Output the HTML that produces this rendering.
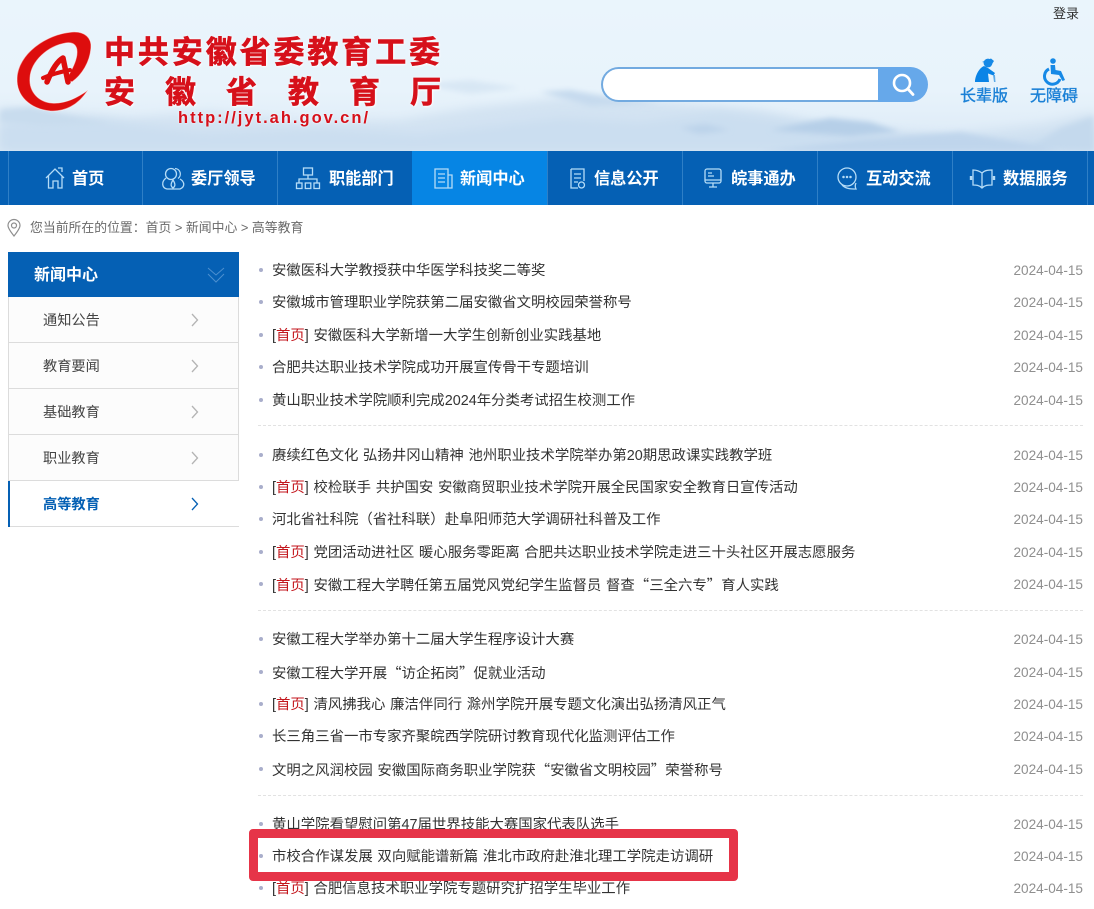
<!DOCTYPE html>
<html lang="zh-CN"><head><meta charset="utf-8"><title>高等教育</title>
<style>
html,body{margin:0;padding:0;background:#fff}
#p{position:relative;width:1094px;height:909px;overflow:hidden;background:#fff;font-family:"Liberation Sans","Noto Sans CJK SC",sans-serif;color:#333}
#p div,#p span.a,#p svg{position:absolute}
.t{white-space:nowrap}
.nav{top:152px;height:54px;line-height:54px;color:#fff;font-size:16.2px;font-weight:700;white-space:nowrap}
.ln{top:151px;width:1px;height:54px;background:#2f7fc6}
.r{left:272px;font-size:14.4px;line-height:20px;white-space:nowrap;color:#333;margin-top:1px;word-spacing:.7px}
.r b{font-weight:400;color:#c3161c}
.q{font-family:"Noto Sans CJK SC",sans-serif}
.d{left:983px;width:100px;text-align:right;font-size:13.6px;line-height:20px;color:#8f8f8f;margin-top:1px}
.b{left:258.5px;width:4px;height:4px;border-radius:50%;background:#a9aecb}
.sp{left:258px;width:825px;border-top:1px dashed #e2e2e2;height:0}
.s{left:43px;font-size:14.2px;line-height:20px;color:#444;white-space:nowrap;margin-top:1px}
.g{left:8px;width:231px;height:1px;background:#dcdcdc}
.hz{color:#d6101a;font-weight:700;font-size:31px;line-height:34px;white-space:nowrap;font-family:"Noto Sans CJK SC",sans-serif;-webkit-text-stroke:.6px #d6101a;text-shadow:0 0 3px #fff,1px 1px 2px #fff}
.bl{font-size:16px;line-height:22px;color:#1a80d6;-webkit-text-stroke:.35px #1a80d6}
</style></head><body><div id="p">

<svg style="left:0;top:0" width="1094" height="151" viewBox="0 0 1094 151">
<defs>
<linearGradient id="bg" x1="0" y1="0" x2="0" y2="1"><stop offset="0" stop-color="#eaf5fc"/><stop offset=".6" stop-color="#e8f3fb"/><stop offset="1" stop-color="#dbe9f6"/></linearGradient>
<filter id="f1" x="-10%" y="-40%" width="120%" height="180%"><feGaussianBlur stdDeviation="5"/></filter>
<filter id="f2" x="-10%" y="-40%" width="120%" height="180%"><feGaussianBlur stdDeviation="3"/></filter>
</defs>
<rect width="1094" height="151" fill="url(#bg)"/>
<path d="M0 108 L60 112 L130 118 L210 112 L300 122 L400 120 L470 108 L560 98 L640 100 L760 110 L840 128 L950 134 L1040 124 L1094 112 V151 H0Z" fill="#d3e3f2" filter="url(#f1)"/>
<path d="M0 124 L100 120 L200 132 L320 128 L420 134 L560 118 L640 122 L720 112 L800 122 L880 134 L980 142 L1094 130 V151 H0Z" fill="#cbdef0" filter="url(#f1)"/>
<path d="M540 92 L570 90 L610 98 L660 104 L590 106Z" fill="#c6daee" filter="url(#f2)"/>
<path d="M770 130 L800 124 L830 118 L870 122 L900 132 L850 136Z" fill="#b6cfe8" filter="url(#f2)"/>
<path d="M680 128 L705 124 L730 130 L700 134Z" fill="#bcd3ea" filter="url(#f2)"/>
<path d="M0 110 L30 107 L60 114 L110 124 L40 126 L0 122Z" fill="#c8dcee" filter="url(#f2)"/>
<path d="M420 84 L470 80 L520 88 L470 94Z" fill="#d8e7f4" filter="url(#f2)"/>
<path d="M1030 148 L1060 128 L1094 116 V151Z" fill="#c4d9ed" filter="url(#f2)"/>
<path d="M760 151 L860 140 L960 132 L1040 146 L1060 151Z" fill="#bfd5ec" filter="url(#f2)"/>
</svg>

<!-- logo -->
<svg style="left:10px;top:28px" width="100" height="92" viewBox="0 0 100 92">
<path fill="#dd0d0d" stroke="#fff" stroke-opacity=".55" stroke-width="1" d="M78 62 C68 78 54 84 40 83 C20 81 6 68 7 50 C8 26 36 6 62 4 C75 3 82 10 81 20 C80 34 72 47 62 54 L56 51 C62 42 67 32 67 24 C67 17 63 14 56 15 C38 18 21 33 20 50 C19 64 29 74 42 75 C55 76 67 70 78 62Z"/>
<g fill="none" stroke="#dd0d0d" stroke-linecap="round" stroke-linejoin="round">
<path stroke-width="5.500" d="M37 54 C41 44 46 34 53 30 L58 54"/>
<path stroke-width="4" d="M33 50 C42 46 50 44 60 42"/>
</g>
</svg>

<div class="hz" style="left:104px;top:33px;letter-spacing:2.9px">中共安徽省委教育工委</div>
<div class="hz" style="left:104px;top:73px">安</div>
<div class="hz" style="left:165px;top:73px">徽</div>
<div class="hz" style="left:226px;top:73px">省</div>
<div class="hz" style="left:288px;top:73px">教</div>
<div class="hz" style="left:349px;top:73px">育</div>
<div class="hz" style="left:410px;top:73px">厅</div>
<div class="t" style="left:178px;top:109px;font:700 16.5px/18px 'Liberation Sans',sans-serif;color:#d6101a;letter-spacing:2px;text-shadow:0 0 2px #fff">http://jyt.ah.gov.cn/</div>

<div class="t" style="left:1053px;top:5px;font-size:13px;line-height:18px;color:#333">登录</div>

<!-- search -->
<div style="left:601px;top:67px;width:277px;height:35px;box-sizing:border-box;background:#fff;border:2px solid #72aae0;border-right:0;border-radius:18px 0 0 18px"></div>
<div style="left:878px;top:67px;width:50px;height:35px;background:#66a8ea;border-radius:0 18px 18px 0"></div>
<svg style="left:888px;top:71px" width="30" height="28" viewBox="0 0 30 28"><circle cx="14" cy="12" r="8" fill="none" stroke="#fff" stroke-width="2.6"/><path d="M20 18 L25 23.500" stroke="#fff" stroke-width="2.8" stroke-linecap="round"/></svg>

<!-- elder + wheelchair -->
<svg style="left:970px;top:56px" width="30" height="30" viewBox="0 0 30 30"><circle cx="18" cy="7" r="4.4" fill="#1689e6"/><path d="M12 6 L21 2.500 L24 5 L22 8 Z" fill="#1689e6"/><path d="M5 26 C5 20 9 12 14 10 L18 12 L25 17 L23.500 19.500 L18 17.500 L19 26Z" fill="#0b84e6"/><path d="M23 19 L25 19 L25.500 26 L24 26Z" fill="#5ca9e6"/></svg>
<svg style="left:1040px;top:56px" width="30" height="30" viewBox="0 0 30 30"><circle cx="13" cy="5" r="2.800" fill="#1689e6"/><path d="M10.500 9 L15 9 L15.500 14 L21 15 L25 24 L22.500 25 L19 19 L11 18Z" fill="#1689e6"/><path d="M9 13 A8 8 0 1 0 20 23" fill="none" stroke="#1689e6" stroke-width="3"/></svg>
<div class="t bl" style="left:960px;top:86px">长辈版</div>
<div class="t bl" style="left:1030px;top:86px">无障碍</div>

<!-- nav -->
<div style="left:0;top:151px;width:1094px;height:54px;background:#0560b4"></div>
<div style="left:412px;top:151px;width:136px;height:54px;background:#0685e4"></div>
<div class="ln" style="left:8px"></div><div class="ln" style="left:142px"></div><div class="ln" style="left:277px"></div><div class="ln" style="left:682px"></div><div class="ln" style="left:817px"></div><div class="ln" style="left:952px"></div><div class="ln" style="left:1087px"></div><div class="ln" style="left:547px"></div>

<svg style="left:0;top:151px" width="1094" height="54" viewBox="0 0 1094 54" fill="none" stroke="#b5dcf7" stroke-width="1.300">
<path d="M46 27 L55 18 L64 27 M48.500 25 V37 H53 V30 H58 V37 H62 V25"/>
<path d="M58 17 L62 17 L62 21"/>
<circle cx="171" cy="23" r="5.500"/><path d="M175 17.500 a5.500 5.500 0 0 1 3 10 M166 27 C161 31 162 37 167 38 H180 C185 36 185 31 180 28 M173 29 C171 32 170 35 173 37 C176 35 175 32 173 29Z"/>
<rect x="303.500" y="17" width="9" height="7"/><path d="M308 24 V28 M299 32 V28 H317 V32"/><rect x="296.500" y="32" width="5.500" height="5.500"/><rect x="305.300" y="32" width="5.500" height="5.500"/><rect x="314" y="32" width="5.500" height="5.500"/>
<path d="M435 18 H448 V37 H435Z M448 24 H452 V37 H448 M438 23 H445 M438 27 H445 M438 31 H445"/>
<path d="M571 18 H584 V30 M571 18 V37 H578 M574 23 H581 M574 27 H581 M574 31 H578"/><circle cx="581.500" cy="34" r="3"/>
<rect x="705" y="18" width="16" height="14" rx="2"/><path d="M708 22 H712 M708 25 H714 M709 36 H717 M713 32 V36 M705 29 H721"/>
<circle cx="847" cy="26" r="9"/><path d="M842 34 C846 38 851 38 856 38 C855 36 855 34 856 32"/><circle cx="843.500" cy="26" r=".6"/><circle cx="847" cy="26" r=".6"/><circle cx="850.500" cy="26" r=".6"/>
<path d="M982 22 C978 19 975 19 973 19 V34 C976 34 979 34 982 37 C985 34 988 34 992 34 V19 C989 19 985 19 982 22Z M982 22 V37"/><path d="M971 25 V29 M994 25 V29" stroke-width="2.400"/>
</svg>

<div class="nav" style="left:72px">首页</div>
<div class="nav" style="left:191px">委厅领导</div>
<div class="nav" style="left:329px">职能部门</div>
<div class="nav" style="left:460px">新闻中心</div>
<div class="nav" style="left:594px">信息公开</div>
<div class="nav" style="left:731px">皖事通办</div>
<div class="nav" style="left:866px">互动交流</div>
<div class="nav" style="left:1003px">数据服务</div>

<!-- breadcrumb -->
<svg style="left:6px;top:218px" width="16" height="19" viewBox="0 0 16 19" fill="none" stroke="#8e8e8e" stroke-width="1.200"><path d="M8 18 C4 13 2 10 2 7.500 A6 6 0 0 1 14 7.500 C14 10 12 13 8 18Z"/><circle cx="8" cy="7.500" r="2.500"/></svg>
<div class="t" style="left:30px;top:219px;font-size:12.85px;line-height:18px;color:#6a6a6a">您当前所在的位置：首页 &gt; 新闻中心 &gt; 高等教育</div>

<!-- sidebar -->
<div style="left:8px;top:252px;width:231px;height:45px;background:#0560b4"></div>
<div class="t" style="left:34px;top:265px;font-size:16px;line-height:22px;font-weight:700;color:#fff">新闻中心</div>
<svg style="left:206px;top:265px" width="20" height="20" viewBox="0 0 20 20" fill="none" stroke="#4c8fcf" stroke-width="1"><path d="M2 3 L10 10 L18 3 M2 9 L10 17 L18 9"/></svg>
<div style="left:8px;top:297px;height:183px;background:#fcfcfc;border-left:1px solid #dcdcdc;border-right:1px solid #dcdcdc;box-sizing:content-box;width:229px"></div>
<div class="g" style="top:342px"></div><div class="g" style="top:388px"></div><div class="g" style="top:434px"></div><div class="g" style="top:480px"></div><div class="g" style="top:526px"></div>
<div style="left:8px;top:481px;width:2px;height:46px;background:#0560b4"></div>
<div class="s" style="top:310px">通知公告</div>
<div class="s" style="top:356px">教育要闻</div>
<div class="s" style="top:402px">基础教育</div>
<div class="s" style="top:448px">职业教育</div>
<div class="s" style="top:494px;color:#0560b4;font-weight:700">高等教育</div>
<svg style="left:190px;top:312px" width="10" height="200" viewBox="0 0 10 200" fill="none" stroke="#b4b4b4" stroke-width="1.300"><path d="M2 2 L7.500 8 L2 14 M2 48 L7.500 54 L2 60 M2 94 L7.500 100 L2 106 M2 140 L7.500 146 L2 152"/><path d="M2 186 L7.500 192 L2 198" stroke="#0560b4"/></svg>

<!-- list -->
<div class="b" style="top:268px"></div><div class="r" style="top:260px">安徽医科大学教授获中华医学科技奖二等奖</div><div class="d" style="top:260px">2024-04-15</div>
<div class="b" style="top:300px"></div><div class="r" style="top:292px">安徽城市管理职业学院获第二届安徽省文明校园荣誉称号</div><div class="d" style="top:292px">2024-04-15</div>
<div class="b" style="top:333px"></div><div class="r" style="top:325px">[<b>首页</b>] 安徽医科大学新增一大学生创新创业实践基地</div><div class="d" style="top:325px">2024-04-15</div>
<div class="b" style="top:365px"></div><div class="r" style="top:357px">合肥共达职业技术学院成功开展宣传骨干专题培训</div><div class="d" style="top:357px">2024-04-15</div>
<div class="b" style="top:398px"></div><div class="r" style="top:390px">黄山职业技术学院顺利完成2024年分类考试招生校测工作</div><div class="d" style="top:390px">2024-04-15</div>
<div class="sp" style="top:425px"></div>
<div class="b" style="top:453px"></div><div class="r" style="top:445px">赓续红色文化 弘扬井冈山精神 池州职业技术学院举办第20期思政课实践教学班</div><div class="d" style="top:445px">2024-04-15</div>
<div class="b" style="top:485px"></div><div class="r" style="top:477px">[<b>首页</b>] 校检联手 共护国安 安徽商贸职业技术学院开展全民国家安全教育日宣传活动</div><div class="d" style="top:477px">2024-04-15</div>
<div class="b" style="top:517px"></div><div class="r" style="top:509px">河北省社科院（省社科联）赴阜阳师范大学调研社科普及工作</div><div class="d" style="top:509px">2024-04-15</div>
<div class="b" style="top:550px"></div><div class="r" style="top:542px">[<b>首页</b>] 党团活动进社区 暖心服务零距离 合肥共达职业技术学院走进三十头社区开展志愿服务</div><div class="d" style="top:542px">2024-04-15</div>
<div class="b" style="top:582px"></div><div class="r" style="top:574px">[<b>首页</b>] 安徽工程大学聘任第五届党风党纪学生监督员 督查<span class="q">“</span>三全六专<span class="q">”</span>育人实践</div><div class="d" style="top:574px">2024-04-15</div>
<div class="sp" style="top:610px"></div>
<div class="b" style="top:637px"></div><div class="r" style="top:629px">安徽工程大学举办第十二届大学生程序设计大赛</div><div class="d" style="top:629px">2024-04-15</div>
<div class="b" style="top:670px"></div><div class="r" style="top:662px">安徽工程大学开展<span class="q">“</span>访企拓岗<span class="q">”</span>促就业活动</div><div class="d" style="top:662px">2024-04-15</div>
<div class="b" style="top:702px"></div><div class="r" style="top:694px">[<b>首页</b>] 清风拂我心 廉洁伴同行 滁州学院开展专题文化演出弘扬清风正气</div><div class="d" style="top:694px">2024-04-15</div>
<div class="b" style="top:734px"></div><div class="r" style="top:726px">长三角三省一市专家齐聚皖西学院研讨教育现代化监测评估工作</div><div class="d" style="top:726px">2024-04-15</div>
<div class="b" style="top:767px"></div><div class="r" style="top:759px">文明之风润校园 安徽国际商务职业学院获<span class="q">“</span>安徽省文明校园<span class="q">”</span>荣誉称号</div><div class="d" style="top:759px">2024-04-15</div>
<div class="sp" style="top:795px"></div>
<div class="b" style="top:822px"></div><div class="r" style="top:814px">黄山学院看望慰问第47届世界技能大赛国家代表队选手</div><div class="d" style="top:814px">2024-04-15</div>
<div class="b" style="top:854px"></div><div class="d" style="top:846px">2024-04-15</div>
<div class="b" style="top:886px"></div><div class="r" style="top:878px">[<b>首页</b>] 合肥信息技术职业学院专题研究扩招学生毕业工作</div><div class="d" style="top:878px">2024-04-15</div>

<!-- red highlight -->
<div style="left:249px;top:829px;width:489px;height:52px;box-sizing:border-box;border:9px solid #e63448;border-radius:4px;background:transparent"></div>
<div style="left:258px;top:838px;width:471px;height:34px;background:#fff"></div>
<div class="b" style="top:854px"></div>
<div class="r" style="top:846px">市校合作谋发展 双向赋能谱新篇 淮北市政府赴淮北理工学院走访调研</div>

</div></body></html>
